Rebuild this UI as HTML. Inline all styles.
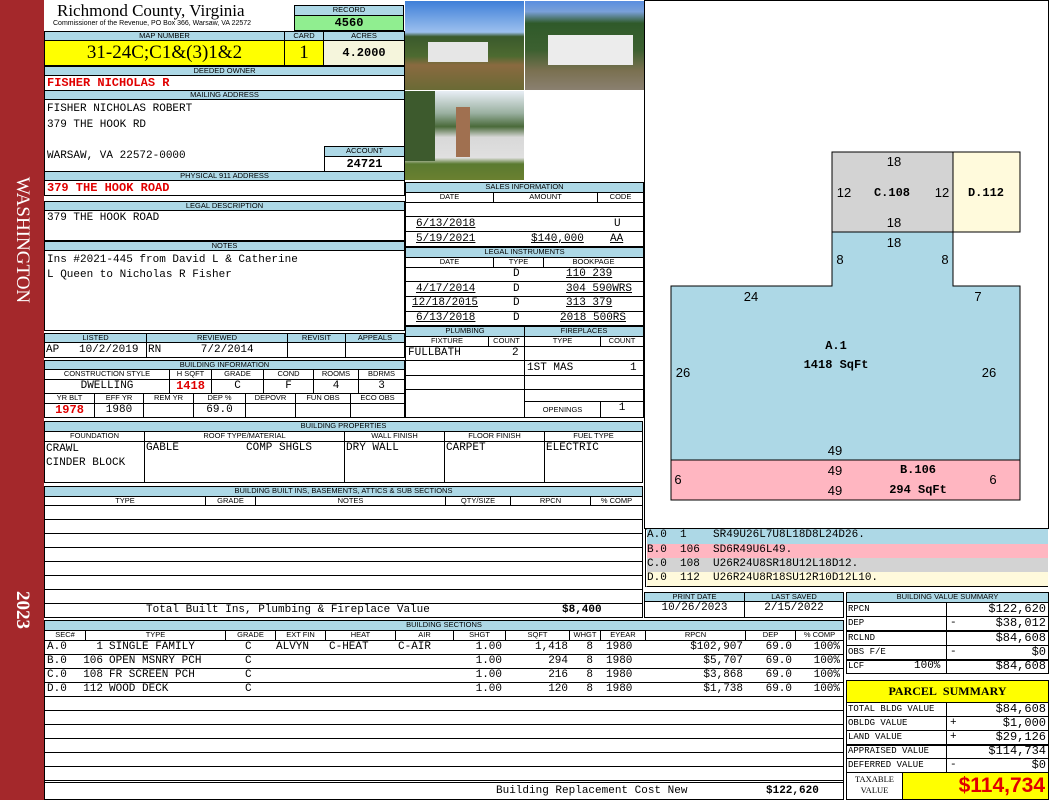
<!DOCTYPE html><html><head><meta charset="utf-8"><style>
*{box-sizing:border-box;margin:0;padding:0}
body{width:1050px;height:800px;position:relative;background:#fff;overflow:hidden;font-family:"Liberation Mono",monospace;font-size:11px;color:#000}
div{position:absolute}
.b{border:1px solid #000}
.h{background:#add8e6;border:1px solid #000;font-family:"Liberation Sans",sans-serif;font-size:7.5px;text-align:center;line-height:8px;white-space:nowrap;overflow:hidden}
.s{border:1px solid #000;font-family:"Liberation Sans",sans-serif;font-size:7.5px;text-align:center;line-height:8px;white-space:nowrap;overflow:hidden}
.v{white-space:nowrap;line-height:13px}
.r{text-align:right}.c{text-align:center}
.red{color:#e00000;font-weight:bold}
.q{position:absolute;white-space:nowrap;line-height:13px}
</style></head><body>
<div style="left:0;top:0;width:44px;height:800px;background:#a4282b"></div>
<div style="left:22px;top:240px;color:#fff;font-family:'Liberation Serif',serif;font-size:19px;transform:translate(-50%,-50%) rotate(90deg);white-space:nowrap">WASHINGTON</div>
<div style="left:22px;top:610px;color:#fff;font-family:'Liberation Serif',serif;font-size:19px;font-weight:bold;transform:translate(-50%,-50%) rotate(90deg);white-space:nowrap">2023</div>

<div style="left:57px;top:1px;font-family:'Liberation Serif',serif;font-size:17px;white-space:nowrap">Richmond County, Virginia</div>
<div style="left:53px;top:20px;font-family:'Liberation Sans',sans-serif;font-size:7px;white-space:nowrap">Commissioner of the Revenue, PO Box 366, Warsaw, VA 22572</div>
<div class="h" style="left:294px;top:5px;width:110px;height:11px">RECORD</div>
<div class="b c" style="left:294px;top:15px;width:110px;height:16px;background:#90ee90;font-weight:bold;font-size:12px;line-height:14px">4560</div>

<div class="h" style="left:44px;top:31px;width:241px;height:10px">MAP NUMBER</div>
<div class="h" style="left:284px;top:31px;width:40px;height:10px">CARD</div>
<div class="h" style="left:323px;top:31px;width:82px;height:10px">ACRES</div>
<div class="b c" style="left:44px;top:40px;width:241px;height:26px;background:#ffff00;font-family:'Liberation Serif',serif;font-size:19px;line-height:24px">31-24C;C1&amp;(3)1&amp;2</div>
<div class="b c" style="left:284px;top:40px;width:40px;height:26px;background:#ffff00;font-family:'Liberation Serif',serif;font-size:19px;line-height:24px">1</div>
<div class="b c" style="left:323px;top:40px;width:82px;height:26px;background:#f5f5dc;font-weight:bold;font-size:12px;line-height:24px">4.2000</div>

<div class="h" style="left:44px;top:66px;width:361px;height:10px">DEEDED OWNER</div>
<div class="b" style="left:44px;top:75px;width:361px;height:16px"></div>
<div class="v red" style="left:47px;top:77px;font-size:12px">FISHER NICHOLAS R</div>
<div class="h" style="left:44px;top:90px;width:361px;height:10px">MAILING ADDRESS</div>
<div class="b" style="left:44px;top:99px;width:361px;height:73px"></div>
<div class="v" style="left:47px;top:102px;line-height:15.5px">FISHER NICHOLAS ROBERT<br>379 THE HOOK RD<br><br>WARSAW, VA 22572-0000</div>
<div class="h" style="left:324px;top:146px;width:81px;height:11px">ACCOUNT</div>
<div class="b c" style="left:324px;top:156px;width:81px;height:16px;font-weight:bold;font-size:12px;line-height:14px">24721</div>
<div class="h" style="left:44px;top:171px;width:361px;height:10px">PHYSICAL 911 ADDRESS</div>
<div class="b" style="left:44px;top:180px;width:361px;height:16px"></div>
<div class="v red" style="left:47px;top:182px;font-size:12px">379 THE HOOK ROAD</div>
<div class="h" style="left:44px;top:201px;width:361px;height:10px">LEGAL DESCRIPTION</div>
<div class="b" style="left:44px;top:210px;width:361px;height:31px"></div>
<div class="v" style="left:47px;top:212px">379 THE HOOK ROAD</div>
<div class="h" style="left:44px;top:241px;width:361px;height:10px">NOTES</div>
<div class="b" style="left:44px;top:250px;width:361px;height:81px"></div>
<div class="v" style="left:47px;top:253px;line-height:15px">Ins #2021-445 from David L &amp; Catherine<br>L Queen to Nicholas R Fisher</div>

<div class="h" style="left:44px;top:333px;width:103px;height:10px">LISTED</div>
<div class="h" style="left:146px;top:333px;width:142px;height:10px">REVIEWED</div>
<div class="h" style="left:287px;top:333px;width:59px;height:10px">REVISIT</div>
<div class="h" style="left:345px;top:333px;width:60px;height:10px">APPEALS</div>
<div class="b" style="left:44px;top:342px;width:103px;height:16px"></div>
<div class="b" style="left:146px;top:342px;width:142px;height:16px"></div>
<div class="b" style="left:287px;top:342px;width:59px;height:16px"></div>
<div class="b" style="left:345px;top:342px;width:60px;height:16px"></div>
<div class="v" style="left:46px;top:344px">AP&nbsp;&nbsp;&nbsp;10/2/2019</div>
<div class="v" style="left:148px;top:344px">RN&nbsp;&nbsp;&nbsp;&nbsp;&nbsp;&nbsp;7/2/2014</div>

<div class="h" style="left:44px;top:360px;width:361px;height:10px">BUILDING INFORMATION</div>
<div class="s" style="left:44px;top:369px;width:126px;height:11px">CONSTRUCTION STYLE</div>
<div class="s" style="left:169px;top:369px;width:43px;height:11px">H SQFT</div>
<div class="s" style="left:211px;top:369px;width:53px;height:11px">GRADE</div>
<div class="s" style="left:263px;top:369px;width:51px;height:11px">COND</div>
<div class="s" style="left:313px;top:369px;width:46px;height:11px">ROOMS</div>
<div class="s" style="left:358px;top:369px;width:47px;height:11px">BDRMS</div>
<div class="b c v" style="left:44px;top:379px;width:126px;height:15px">DWELLING</div>
<div class="b c v red" style="left:169px;top:379px;width:43px;height:15px;font-size:12px">1418</div>
<div class="b c v" style="left:211px;top:379px;width:53px;height:15px">C</div>
<div class="b c v" style="left:263px;top:379px;width:51px;height:15px">F</div>
<div class="b c v" style="left:313px;top:379px;width:46px;height:15px">4</div>
<div class="b c v" style="left:358px;top:379px;width:47px;height:15px">3</div>
<div class="s" style="left:44px;top:393px;width:51px;height:11px">YR BLT</div>
<div class="s" style="left:94px;top:393px;width:50px;height:11px">EFF YR</div>
<div class="s" style="left:143px;top:393px;width:51px;height:11px">REM YR</div>
<div class="s" style="left:193px;top:393px;width:53px;height:11px">DEP %</div>
<div class="s" style="left:245px;top:393px;width:51px;height:11px">DEPOVR</div>
<div class="s" style="left:295px;top:393px;width:56px;height:11px">FUN OBS</div>
<div class="s" style="left:350px;top:393px;width:55px;height:11px">ECO OBS</div>
<div class="b c v red" style="left:44px;top:403px;width:51px;height:15px;font-size:12px">1978</div>
<div class="b c v" style="left:94px;top:403px;width:50px;height:15px">1980</div>
<div class="b" style="left:143px;top:403px;width:51px;height:15px"></div>
<div class="b c v" style="left:193px;top:403px;width:53px;height:15px">69.0</div>
<div class="b" style="left:245px;top:403px;width:51px;height:15px"></div>
<div class="b" style="left:295px;top:403px;width:56px;height:15px"></div>
<div class="b" style="left:350px;top:403px;width:55px;height:15px"></div>

<!-- photos -->
<div style="left:405px;top:1px;width:119px;height:89px;background:linear-gradient(#3f7fd8 0,#9cc0ee 35%,#3a5a2c 40%,#4d6a30 62%,#8a6a40 72%,#6a6a35 100%)"></div>
<div style="left:428px;top:42px;width:60px;height:20px;background:#e6e6e6"></div>
<div style="left:525px;top:1px;width:119px;height:89px;background:linear-gradient(#5a8ee0 0,#7aa0d8 12%,#2f5a2a 25%,#3c6030 55%,#7a7050 78%,#8a8070 100%)"></div>
<div style="left:548px;top:35px;width:85px;height:30px;background:#ececec"></div>
<div style="left:405px;top:91px;width:119px;height:89px;background:linear-gradient(#e8eef5 0,#9ab0a0 25%,#4a6a3a 40%,#d8d8d8 52%,#e0e0e0 75%,#5a7a30 82%,#6a8030 100%)"></div>
<div style="left:456px;top:107px;width:14px;height:50px;background:#a07050"></div>
<div style="left:405px;top:91px;width:30px;height:70px;background:#3d5a2d"></div>

<!-- sales -->
<div class="h" style="left:405px;top:182px;width:239px;height:11px">SALES INFORMATION</div>
<div class="s" style="left:405px;top:192px;width:89px;height:11px">DATE</div>
<div class="s" style="left:493px;top:192px;width:105px;height:11px">AMOUNT</div>
<div class="s" style="left:597px;top:192px;width:47px;height:11px">CODE</div>
<div class="b" style="left:405px;top:202px;width:239px;height:15px"></div>
<div class="b" style="left:405px;top:216px;width:239px;height:16px"></div>
<div class="b" style="left:405px;top:231px;width:239px;height:16px"></div>
<div class="v" style="left:416px;top:218px;text-decoration:underline">6/13/2018</div><div class="v" style="left:614px;top:218px">U</div>
<div class="v" style="left:416px;top:233px;text-decoration:underline">5/19/2021</div><div class="v" style="left:531px;top:233px;text-decoration:underline">$140,000</div><div class="v" style="left:610px;top:233px;text-decoration:underline">AA</div>
<div class="h" style="left:405px;top:247px;width:239px;height:11px">LEGAL INSTRUMENTS</div>
<div class="s" style="left:405px;top:257px;width:89px;height:11px">DATE</div>
<div class="s" style="left:493px;top:257px;width:51px;height:11px">TYPE</div>
<div class="s" style="left:543px;top:257px;width:101px;height:11px">BOOKPAGE</div>
<div class="b" style="left:405px;top:267px;width:239px;height:15px"></div>
<div class="b" style="left:405px;top:281px;width:239px;height:16px"></div>
<div class="b" style="left:405px;top:296px;width:239px;height:16px"></div>
<div class="b" style="left:405px;top:311px;width:239px;height:15px"></div>
<div class="v" style="left:513px;top:268px">D</div><div class="v" style="left:566px;top:268px;text-decoration:underline">110 239</div>
<div class="v" style="left:416px;top:283px;text-decoration:underline">4/17/2014</div><div class="v" style="left:513px;top:283px">D</div><div class="v" style="left:566px;top:283px;text-decoration:underline">304 590WRS</div>
<div class="v" style="left:412px;top:297px;text-decoration:underline">12/18/2015</div><div class="v" style="left:513px;top:297px">D</div><div class="v" style="left:566px;top:297px;text-decoration:underline">313 379</div>
<div class="v" style="left:416px;top:312px;text-decoration:underline">6/13/2018</div><div class="v" style="left:513px;top:312px">D</div><div class="v" style="left:560px;top:312px;text-decoration:underline">2018 500RS</div>

<div class="h" style="left:405px;top:326px;width:120px;height:11px">PLUMBING</div>
<div class="h" style="left:524px;top:326px;width:120px;height:11px">FIREPLACES</div>
<div class="s" style="left:405px;top:336px;width:84px;height:11px">FIXTURE</div>
<div class="s" style="left:488px;top:336px;width:37px;height:11px">COUNT</div>
<div class="s" style="left:524px;top:336px;width:77px;height:11px">TYPE</div>
<div class="s" style="left:600px;top:336px;width:44px;height:11px">COUNT</div>
<div class="b" style="left:405px;top:346px;width:120px;height:72px"></div>
<div style="left:405px;top:360px;width:120px;border-top:1px solid #000"></div>
<div style="left:405px;top:375px;width:120px;border-top:1px solid #000"></div>
<div style="left:405px;top:389px;width:120px;border-top:1px solid #000"></div>
<div class="b" style="left:524px;top:346px;width:120px;height:72px"></div>
<div style="left:524px;top:360px;width:120px;border-top:1px solid #000"></div>
<div style="left:524px;top:375px;width:120px;border-top:1px solid #000"></div>
<div style="left:524px;top:389px;width:120px;border-top:1px solid #000"></div>
<div style="left:524px;top:401px;width:120px;border-top:1px solid #000"></div>
<div class="v" style="left:408px;top:347px">FULLBATH</div><div class="v" style="left:512px;top:347px">2</div>
<div class="v" style="left:527px;top:362px">1ST MAS</div><div class="v" style="left:630px;top:362px">1</div>
<div class="s" style="left:524px;top:401px;width:77px;height:17px;line-height:15px">OPENINGS</div>
<div class="b c v" style="left:600px;top:401px;width:44px;height:17px">1</div>

<!-- building properties -->
<div class="h" style="left:44px;top:421px;width:599px;height:11px">BUILDING PROPERTIES</div>
<div class="s" style="left:44px;top:431px;width:101px;height:11px">FOUNDATION</div>
<div class="s" style="left:144px;top:431px;width:201px;height:11px">ROOF TYPE/MATERIAL</div>
<div class="s" style="left:344px;top:431px;width:101px;height:11px">WALL FINISH</div>
<div class="s" style="left:444px;top:431px;width:101px;height:11px">FLOOR FINISH</div>
<div class="s" style="left:544px;top:431px;width:99px;height:11px">FUEL TYPE</div>
<div class="b" style="left:44px;top:441px;width:101px;height:42px"></div>
<div class="b" style="left:144px;top:441px;width:201px;height:42px"></div>
<div class="b" style="left:344px;top:441px;width:101px;height:42px"></div>
<div class="b" style="left:444px;top:441px;width:101px;height:42px"></div>
<div class="b" style="left:544px;top:441px;width:99px;height:42px"></div>
<div class="v" style="left:46px;top:442px;line-height:14px">CRAWL<br>CINDER BLOCK</div>
<div class="v" style="left:146px;top:442px">GABLE</div><div class="v" style="left:246px;top:442px">COMP SHGLS</div>
<div class="v" style="left:346px;top:442px">DRY WALL</div>
<div class="v" style="left:446px;top:442px">CARPET</div>
<div class="v" style="left:546px;top:442px">ELECTRIC</div>

<!-- built ins -->
<div class="h" style="left:44px;top:486px;width:599px;height:11px">BUILDING BUILT INS, BASEMENTS, ATTICS &amp; SUB SECTIONS</div>
<div class="s" style="left:44px;top:496px;width:162px;height:10px">TYPE</div>
<div class="s" style="left:205px;top:496px;width:51px;height:10px">GRADE</div>
<div class="s" style="left:255px;top:496px;width:191px;height:10px">NOTES</div>
<div class="s" style="left:445px;top:496px;width:66px;height:10px">QTY/SIZE</div>
<div class="s" style="left:510px;top:496px;width:81px;height:10px">RPCN</div>
<div class="s" style="left:590px;top:496px;width:53px;height:10px">% COMP</div>
<div class="b" style="left:44px;top:505px;width:599px;height:99px;background:repeating-linear-gradient(#fff 0,#fff 13px,#000 13px,#000 14px)"></div>
<div class="b" style="left:44px;top:603px;width:599px;height:15px"></div>
<div class="v" style="left:146px;top:604px">Total Built Ins, Plumbing &amp; Fireplace Value</div>
<div class="v" style="left:562px;top:604px;font-weight:bold">$8,400</div>

<div class="h" style="left:644px;top:592px;width:101px;height:10px">PRINT DATE</div>
<div class="h" style="left:744px;top:592px;width:100px;height:10px">LAST SAVED</div>
<div class="b c v" style="left:644px;top:601px;width:101px;height:17px">10/26/2023</div>
<div class="b c v" style="left:744px;top:601px;width:100px;height:17px">2/15/2022</div>

<!-- building sections -->
<div class="h" style="left:44px;top:620px;width:800px;height:11px">BUILDING SECTIONS</div>
<div class="s" style="left:44px;top:630px;width:42px;height:11px">SEC#</div>
<div class="s" style="left:85px;top:630px;width:141px;height:11px">TYPE</div>
<div class="s" style="left:225px;top:630px;width:51px;height:11px">GRADE</div>
<div class="s" style="left:275px;top:630px;width:51px;height:11px">EXT FIN</div>
<div class="s" style="left:325px;top:630px;width:71px;height:11px">HEAT</div>
<div class="s" style="left:395px;top:630px;width:59px;height:11px">AIR</div>
<div class="s" style="left:453px;top:630px;width:53px;height:11px">SHGT</div>
<div class="s" style="left:505px;top:630px;width:65px;height:11px">SQFT</div>
<div class="s" style="left:569px;top:630px;width:32px;height:11px">WHGT</div>
<div class="s" style="left:600px;top:630px;width:46px;height:11px">EYEAR</div>
<div class="s" style="left:645px;top:630px;width:101px;height:11px">RPCN</div>
<div class="s" style="left:745px;top:630px;width:51px;height:11px">DEP</div>
<div class="s" style="left:795px;top:630px;width:49px;height:11px">% COMP</div>
<div class="b" style="left:44px;top:640px;width:800px;height:143px;background:repeating-linear-gradient(#fff 0,#fff 13px,#000 13px,#000 14px)"></div>

<div style="left:0;top:641px;width:1050px;height:14px">
<span class="q" style="left:47px">A.0</span><span class="q r" style="left:70px;width:33px">1</span><span class="q" style="left:109px">SINGLE FAMILY</span><span class="q" style="left:245px">C</span><span class="q" style="left:276px">ALVYN</span><span class="q" style="left:329px">C-HEAT</span><span class="q" style="left:398px">C-AIR</span><span class="q r" style="left:450px;width:52px">1.00</span><span class="q r" style="left:510px;width:58px">1,418</span><span class="q r" style="left:575px;width:18px">8</span><span class="q" style="left:606px">1980</span><span class="q r" style="left:650px;width:93px">$102,907</span><span class="q r" style="left:750px;width:42px">69.0</span><span class="q r" style="left:800px;width:40px">100%</span></div>
<div style="left:0;top:655px;width:1050px;height:14px">
<span class="q" style="left:47px">B.0</span><span class="q r" style="left:70px;width:33px">106</span><span class="q" style="left:109px">OPEN MSNRY PCH</span><span class="q" style="left:245px">C</span><span class="q r" style="left:450px;width:52px">1.00</span><span class="q r" style="left:510px;width:58px">294</span><span class="q r" style="left:575px;width:18px">8</span><span class="q" style="left:606px">1980</span><span class="q r" style="left:650px;width:93px">$5,707</span><span class="q r" style="left:750px;width:42px">69.0</span><span class="q r" style="left:800px;width:40px">100%</span></div>
<div style="left:0;top:669px;width:1050px;height:14px">
<span class="q" style="left:47px">C.0</span><span class="q r" style="left:70px;width:33px">108</span><span class="q" style="left:109px">FR SCREEN PCH</span><span class="q" style="left:245px">C</span><span class="q r" style="left:450px;width:52px">1.00</span><span class="q r" style="left:510px;width:58px">216</span><span class="q r" style="left:575px;width:18px">8</span><span class="q" style="left:606px">1980</span><span class="q r" style="left:650px;width:93px">$3,868</span><span class="q r" style="left:750px;width:42px">69.0</span><span class="q r" style="left:800px;width:40px">100%</span></div>
<div style="left:0;top:683px;width:1050px;height:14px">
<span class="q" style="left:47px">D.0</span><span class="q r" style="left:70px;width:33px">112</span><span class="q" style="left:109px">WOOD DECK</span><span class="q" style="left:245px">C</span><span class="q r" style="left:450px;width:52px">1.00</span><span class="q r" style="left:510px;width:58px">120</span><span class="q r" style="left:575px;width:18px">8</span><span class="q" style="left:606px">1980</span><span class="q r" style="left:650px;width:93px">$1,738</span><span class="q r" style="left:750px;width:42px">69.0</span><span class="q r" style="left:800px;width:40px">100%</span></div>

<div class="b" style="left:44px;top:782px;width:800px;height:18px"></div>
<div class="v" style="left:496px;top:785px">Building Replacement Cost New</div>
<div class="v" style="left:766px;top:785px;font-weight:bold">$122,620</div>

<!-- sketch -->
<div class="b" style="left:644px;top:0;width:405px;height:529px"></div>
<svg style="position:absolute;left:0;top:0" width="1050" height="530">
<rect x="832" y="152" width="121" height="80" fill="#d3d3d3" stroke="#000"/>
<rect x="953" y="152" width="67" height="80" fill="#fffadc" stroke="#000"/>
<polygon points="832,232 953,232 953,286 1020,286 1020,460 671,460 671,286 832,286" fill="#add8e6" stroke="#000"/>
<rect x="671" y="460" width="349" height="40" fill="#ffb6c1" stroke="#000"/>
<g font-family="Liberation Sans,sans-serif" font-size="13" text-anchor="middle">
<text x="894" y="166">18</text><text x="844" y="197">12</text><text x="942" y="197">12</text><text x="894" y="227">18</text>
<text x="894" y="247">18</text><text x="840" y="264">8</text><text x="945" y="264">8</text>
<text x="751" y="301">24</text><text x="978" y="301">7</text>
<text x="683" y="377">26</text><text x="989" y="377">26</text>
<text x="835" y="455">49</text><text x="835" y="475">49</text><text x="835" y="495">49</text>
<text x="678" y="484">6</text><text x="993" y="484">6</text>
</g>
<g font-family="Liberation Mono,monospace" font-size="12" font-weight="bold" text-anchor="middle">
<text x="892" y="196">C.108</text><text x="986" y="196">D.112</text>
<text x="836" y="349">A.1</text><text x="836" y="368">1418 SqFt</text>
<text x="918" y="473">B.106</text><text x="918" y="493">294 SqFt</text>
</g>
</svg>
<div style="left:645px;top:529px;width:403px;height:58px;border:1px solid #000;border-left:3px double #000"></div>
<div class="v" style="left:647px;top:529px;width:401px;height:15px;background:#add8e6;white-space:pre">A.0  1    SR49U26L7U8L18D8L24D26.</div>
<div class="v" style="left:647px;top:544px;width:401px;height:14px;background:#ffb6c1;white-space:pre">B.0  106  SD6R49U6L49.</div>
<div class="v" style="left:647px;top:558px;width:401px;height:14px;background:#d3d3d3;white-space:pre">C.0  108  U26R24U8SR18U12L18D12.</div>
<div class="v" style="left:647px;top:572px;width:401px;height:14px;background:#fffadc;white-space:pre">D.0  112  U26R24U8R18SU12R10D12L10.</div>

<!-- value summary -->
<div class="h" style="left:846px;top:592px;width:203px;height:11px">BUILDING VALUE SUMMARY</div>
<div class="b" style="left:846px;top:602px;width:101px;height:72px"></div>
<div class="b" style="left:946px;top:602px;width:103px;height:72px"></div>
<div style="left:846px;top:616px;width:203px;border-top:1px solid #000"></div>
<div style="left:846px;top:630px;width:203px;border-top:2px solid #000"></div>
<div style="left:846px;top:645px;width:203px;border-top:1px solid #000"></div>
<div style="left:846px;top:659px;width:203px;border-top:2px solid #000"></div>
<div class="v" style="left:848px;top:603px;font-size:9px">RPCN</div><div class="v r" style="left:950px;top:603px;width:96px;font-size:12px">$122,620</div>
<div class="v" style="left:848px;top:617px;font-size:9px">DEP</div><div class="v" style="left:950px;top:617px">-</div><div class="v r" style="left:950px;top:617px;width:96px;font-size:12px">$38,012</div>
<div class="v" style="left:848px;top:632px;font-size:9px">RCLND</div><div class="v r" style="left:950px;top:632px;width:96px;font-size:12px">$84,608</div>
<div class="v" style="left:848px;top:646px;font-size:9px">OBS F/E</div><div class="v" style="left:950px;top:646px">-</div><div class="v r" style="left:950px;top:646px;width:96px;font-size:12px">$0</div>
<div class="v" style="left:848px;top:660px;font-size:9px">LCF</div><div class="v" style="left:914px;top:660px">100%</div><div class="v r" style="left:950px;top:660px;width:96px;font-size:12px">$84,608</div>

<div class="b c" style="left:846px;top:680px;width:203px;height:23px;background:#ffff00;font-family:'Liberation Serif',serif;font-weight:bold;font-size:12px;line-height:21px">PARCEL&nbsp;&nbsp;SUMMARY</div>
<div class="b" style="left:846px;top:702px;width:101px;height:71px"></div>
<div class="b" style="left:946px;top:702px;width:103px;height:71px"></div>
<div style="left:846px;top:716px;width:203px;border-top:1px solid #000"></div>
<div style="left:846px;top:730px;width:203px;border-top:1px solid #000"></div>
<div style="left:846px;top:744px;width:203px;border-top:2px solid #000"></div>
<div style="left:846px;top:758px;width:203px;border-top:1px solid #000"></div>
<div class="v" style="left:848px;top:703px;font-size:9px">TOTAL BLDG VALUE</div><div class="v r" style="left:950px;top:703px;width:96px;font-size:12px">$84,608</div>
<div class="v" style="left:848px;top:717px;font-size:9px">OBLDG VALUE</div><div class="v" style="left:950px;top:717px">+</div><div class="v r" style="left:950px;top:717px;width:96px;font-size:12px">$1,000</div>
<div class="v" style="left:848px;top:731px;font-size:9px">LAND VALUE</div><div class="v" style="left:950px;top:731px">+</div><div class="v r" style="left:950px;top:731px;width:96px;font-size:12px">$29,126</div>
<div class="v" style="left:848px;top:745px;font-size:9px">APPRAISED VALUE</div><div class="v r" style="left:950px;top:745px;width:96px;font-size:12px">$114,734</div>
<div class="v" style="left:848px;top:759px;font-size:9px">DEFERRED VALUE</div><div class="v" style="left:950px;top:759px">-</div><div class="v r" style="left:950px;top:759px;width:96px;font-size:12px">$0</div>
<div class="b" style="left:846px;top:772px;width:57px;height:28px"></div>
<div class="c" style="left:846px;top:774px;width:57px;font-family:'Liberation Serif',serif;font-size:8.5px;line-height:11px">TAXABLE<br>VALUE</div>
<div class="b r" style="left:902px;top:772px;width:147px;height:28px;background:#ffff00;color:#e00000;font-family:'Liberation Sans',sans-serif;font-weight:bold;font-size:21px;line-height:26px;padding-right:3px">$114,734</div>
</body></html>
